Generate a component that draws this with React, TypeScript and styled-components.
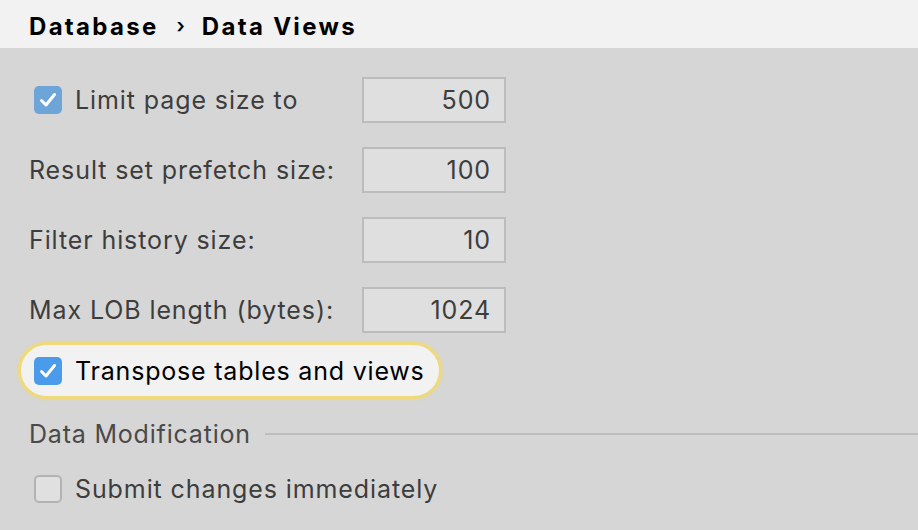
import React from "react";
import styled, { createGlobalStyle } from "styled-components";

const GlobalStyle = createGlobalStyle`
  html, body {
    margin: 0;
    padding: 0;
    background: #d6d6d6;
  }
  body {
    font-family: Inter, "Noto Sans", "Liberation Sans", sans-serif;
  }
`;

interface Field {
  label: string;
  value: string;
  checkbox?: boolean;
}

const fields: Field[] = [
  { label: "Limit page size to", value: "500", checkbox: true },
  { label: "Result set prefetch size:", value: "100" },
  { label: "Filter history size:", value: "10" },
  { label: "Max LOB length (bytes):", value: "1024" },
];

const CheckIcon = () => (
  <svg width="22" height="22" viewBox="0 0 22 22">
    <path
      d="M4.5 11.5 L9 16 L17.5 5.5"
      fill="none"
      stroke="#fff"
      strokeWidth="3"
      strokeLinecap="round"
      strokeLinejoin="round"
    />
  </svg>
);

const Page = () => {
  return (
    <StyledPage>
      <GlobalStyle />
      <Header>
        Database<Chevron>›</Chevron>Data Views
      </Header>
      <Body>
        <Grid>
          {fields.map((f, i) => (
            <React.Fragment key={i}>
              {f.checkbox ? (
                <CheckLabel>
                  <Box $checked $muted>
                    <CheckIcon />
                  </Box>
                  {f.label}
                </CheckLabel>
              ) : (
                <Label>{f.label}</Label>
              )}
              <NumberInput>{f.value}</NumberInput>
            </React.Fragment>
          ))}
        </Grid>
        <Focused>
          <Box $checked>
            <CheckIcon />
          </Box>
          Transpose tables and views
        </Focused>
        <Section>
          <span>Data Modification</span>
          <Line />
        </Section>
        <OptionRow>
          <Box />
          Submit changes immediately
        </OptionRow>
      </Body>
    </StyledPage>
  );
};

const StyledPage = styled.div`
  width: 918px;
  height: 530px;
  overflow: hidden;
  background: #d6d6d6;
`;

const Header = styled.div`
  height: 48px;
  box-sizing: border-box;
  padding: 12px 0 0 29px;
  background: #f2f2f2;
  font-size: 24px;
  font-weight: 700;
  letter-spacing: 2.3px;
  color: #000;
  display: flex;
  align-items: flex-start;
`;

const Chevron = styled.span`
  margin: 0 17px 0 18px;
  font-size: 20px;
  font-weight: 600;
  line-height: 28px;
  letter-spacing: 0;
`;

const Body = styled.div`
  padding: 29px 0 0 0;
  display: flex;
  flex-direction: column;
`;

const Grid = styled.div`
  display: grid;
  grid-template-columns: 333px 144px;
  grid-auto-rows: 46px;
  row-gap: 24px;
  padding-left: 29px;
`;

const Label = styled.div`
  display: flex;
  align-items: center;
  font-size: 25px;
  color: #3d3d3d;
  letter-spacing: 0.9px;
  white-space: nowrap;
`;

const CheckLabel = styled(Label)`
  padding-left: 5px;
  gap: 13px;
`;

const OptionRow = styled(CheckLabel)`
  margin: 21px 0 0 29px;
  height: 34px;
`;

const Box = styled.div<{ $checked?: boolean; $muted?: boolean }>`
  width: 28px;
  height: 28px;
  box-sizing: border-box;
  border-radius: 5px;
  display: flex;
  align-items: center;
  justify-content: center;
  flex-shrink: 0;
  background: ${(p) =>
    p.$checked ? (p.$muted ? "#6ea5d9" : "#4a9be9") : "#e0e0e0"};
  border: ${(p) => (p.$checked ? "none" : "2px solid #b3b3b3")};
`;

const NumberInput = styled.div`
  box-sizing: border-box;
  height: 46px;
  border: 2px solid #bcbcbc;
  background: #dfdfdf;
  display: flex;
  align-items: center;
  justify-content: flex-end;
  padding-right: 13px;
  font-size: 25px;
  color: #3d3d3d;
  letter-spacing: 0.9px;
`;

const Focused = styled.div`
  align-self: flex-start;
  margin: 9px 0 0 18px;
  height: 57px;
  box-sizing: border-box;
  border: 3px solid #eed97c;
  border-radius: 29px;
  background: #f2f2f2;
  box-shadow: 0 0 2px 1px rgba(240, 220, 130, 0.5);
  display: flex;
  align-items: center;
  gap: 13px;
  padding: 0 14px 0 13px;
  font-size: 25px;
  color: #000;
  letter-spacing: 0.8px;
  white-space: nowrap;
`;

const Section = styled.div`
  margin: 18px 0 0 29px;
  display: flex;
  align-items: center;
  gap: 14px;
  font-size: 25px;
  color: #4a4a4a;
  letter-spacing: 0.8px;
  height: 34px;
  white-space: nowrap;
`;

const Line = styled.div`
  flex: 1;
  height: 2px;
  background: #bdbdbd;
`;

const App = () => <Page />;

export default App;
